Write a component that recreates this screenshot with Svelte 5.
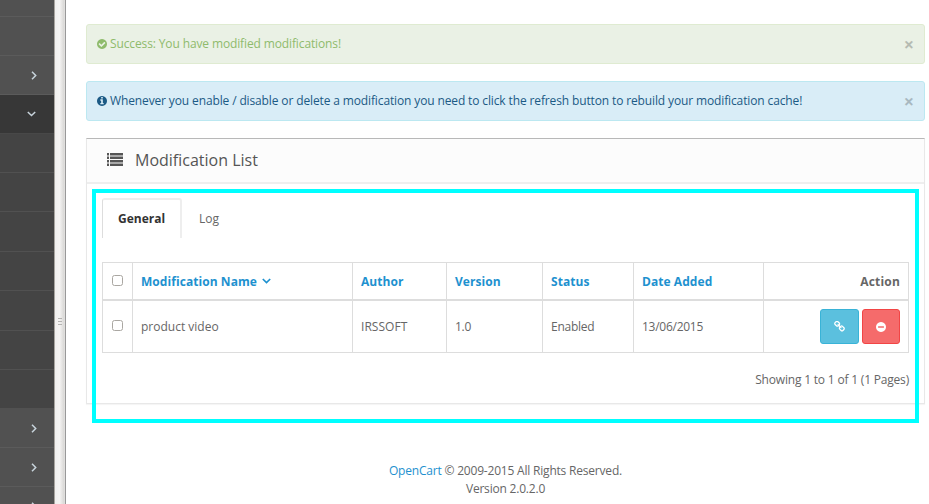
<script>
  const menu = [
    { h: 17 }, { h: 39 }, { h: 39, icon: 'right' }, { h: 39, active: true, icon: 'down' },
    { h: 39, sub: true }, { h: 39, sub: true }, { h: 40, sub: true }, { h: 39, sub: true },
    { h: 40, sub: true }, { h: 39, sub: true }, { h: 39, sub: true, last: true },
    { h: 39, icon: 'right' }, { h: 39, icon: 'right' }, { h: 39, icon: 'right' }
  ];
  const columns = ['Author', 'Version', 'Status', 'Date Added'];
  const cells = [
    { text: 'IRSSOFT', spacing: 0.05 },
    { text: '1.0', spacing: -0.3 },
    { text: 'Enabled', spacing: -0.25 },
    { text: '13/06/2015', spacing: -0.27 }
  ];
  const disc = 'm320-64q0 209-103 385.5t-279.5 279.5-385.5 103-385.5-103-279.5-279.5-103-385.5 103-385.5 279.5-279.5 385.5-103 385.5 103 279.5 279.5 103 385.5z';
</script>

<div class="page">
  <nav class="sidebar">
    {#each menu as item}
      <div class="item" class:active={item.active} class:sub={item.sub} class:last={item.last} style:height="{item.h}px">
        {#if item.icon === 'right'}
          <svg class="right" width="6" height="9" viewBox="0 0 6 9"><path d="M1 .8 4.7 4.5 1 8.2" /></svg>
        {:else if item.icon === 'down'}
          <svg class="down" width="9" height="6" viewBox="0 0 9 6"><path d="M.8 1 4.5 4.5 8.2 1" /></svg>
        {/if}
      </div>
    {/each}
  </nav>
  <div class="splitter"><i></i><i></i><i></i></div>

  <main>
    <div class="alert success">
      <svg class="circle" width="10" height="10" viewBox="128 128 1536 1536"><path d="M1412 734q0-28-18-46l-91-90q-19-19-45-19t-45 19l-408 407-226-226q-19-19-45-19t-45 19l-91 90q-18 18-18 46 0 27 18 45l362 362q19 19 45 19 27 0 46-19l543-543q18-18 18-45zm252 162q0 209-103 385.5t-279.5 279.5-385.5 103-385.5-103-279.5-279.5-103-385.5 103-385.5 279.5-279.5 385.5-103 385.5 103 279.5 279.5 103 385.5z" /></svg>
      <span class="s1">Success: You have modified modifications!</span>
      <b class="close">×</b>
    </div>
    <div class="alert info">
      <svg class="circle" width="10" height="10" viewBox="128 128 1536 1536"><path d="M1152 1376v-160q0-14-9-23t-23-9h-96v-512q0-14-9-23t-23-9h-320q-14 0-23 9t-9 23v160q0 14 9 23t23 9h96v320h-96q-14 0-23 9t-9 23v160q0 14 9 23t23 9h448q14 0 23-9t9-23zm-128-896v-160q0-14-9-23t-23-9h-192q-14 0-23 9t-9 23v160q0 14 9 23t23 9h192q14 0 23-9t9-23zm640 416q0 209-103 385.5t-279.5 279.5-385.5 103-385.5-103-279.5-279.5-103-385.5 103-385.5 279.5-279.5 385.5-103 385.5 103 279.5 279.5 103 385.5z" /></svg>
      <span class="s2">Whenever you enable / disable or delete a modification you need to click the refresh button to rebuild your modification cache!</span>
      <b class="close">×</b>
    </div>

    <section class="panel">
      <header>
        <svg width="16" height="13" viewBox="0 0 16 13"><path d="M0 0h2v2.4H0zM3 0h13v2.4H3zM0 3.5h2v2.4H0zM3 3.5h13v2.4H3zM0 7h2v2.4H0zM3 7h13v2.4H3zM0 10.5h2v2.4H0zM3 10.5h13v2.4H3z" /></svg>
        <h3>Modification List</h3>
      </header>
      <div class="body">
        <div class="tabs">
          <div class="tab on"><span>General</span></div>
          <div class="tab"><span>Log</span></div>
        </div>
        <table>
          <colgroup>
            <col style:width="30px" /><col style:width="220px" /><col style:width="94px" /><col style:width="96px" /><col style:width="91px" /><col style:width="130px" /><col style:width="145px" />
          </colgroup>
          <thead>
            <tr>
              <th class="check"><i class="box"></i></th>
              <th><span class="name">Modification Name</span><svg class="sort" width="9" height="6" viewBox="0 0 9 6"><path d="M.8 1 4.5 4.5 8.2 1" /></svg></th>
              {#each columns as c}<th>{c}</th>{/each}
              <th class="end">Action</th>
            </tr>
          </thead>
          <tbody>
            <tr>
              <td class="check"><i class="box"></i></td>
              <td>product video</td>
              {#each cells as c}<td style:letter-spacing="{c.spacing}px">{c.text}</td>{/each}
              <td class="end">
                <div class="actions">
                  <span class="btn blue"><svg width="11" height="11" viewBox="64 64 1664 1664"><path d="M1520 1216q0-40-28-68l-208-208q-28-28-68-28-42 0-72 32 3 3 19 18.5t21.5 21.5 15 19 13 25.5 3.5 27.5q0 40-28 68t-68 28q-15 0-27.5-3.5t-25.5-13-19-15-21.5-21.5-18.5-19q-33 31-33 73 0 40 28 68l206 207q27 27 68 27 40 0 68-26l147-146q28-28 28-67zm-703-705q0-40-28-68l-206-207q-28-28-68-28-39 0-68 27l-147 146q-28 28-28 67 0 40 28 68l208 208q27 27 68 27 42 0 72-31-3-3-19-18.5t-21.5-21.5-15-19-13-25.5-3.5-27.5q0-40 28-68t68-28q15 0 27.5 3.5t25.5 13 19 15 21.5 21.5 18.5 19q33-31 33-73zm895 705q0 120-85 203l-147 146q-83 83-203 83-121 0-204-85l-206-207q-83-83-83-203 0-123 88-209l-88-88q-86 88-208 88-120 0-204-84l-208-208q-84-84-84-204t85-203l147-146q83-83 203-83 121 0 204 85l206 207q83 83 83 203 0 123-88 209l88 88q86-88 208-88 120 0 204 84l208 208q84 84 84 204z" /></svg></span>
                  <span class="btn red"><svg width="10" height="10" viewBox="128 128 1536 1536"><path d={'M1344 960v-128q0-26-19-45t-45-19h-768q-26 0-45 19t-19 45v128q0 26 19 45t45 19h768q26 0 45-19t19-45z' + disc} /></svg></span>
                </div>
              </td>
            </tr>
          </tbody>
        </table>
        <div class="count"><span>Showing 1 to 1 of 1 (1 Pages)</span></div>
      </div>
      <div class="highlight"></div>
    </section>

    <footer>
      <div class="f1"><span class="brand">OpenCart</span> © 2009-2015 All Rights Reserved.</div>
      <div class="f2">Version 2.0.2.0</div>
    </footer>
  </main>
</div>

<style>
  :global(body) { background: #fff; overflow: hidden; }
  .page { display: flex; width: 929px; height: 504px; overflow: hidden; font: 12px/17px 'Open Sans', 'Noto Sans', sans-serif; color: #666; }
  .page * { box-sizing: border-box; }
  svg { display: block; flex: none; fill: currentColor; }
  .sidebar { width: 54px; height: 504px; flex: none; overflow: hidden; background: #515151; }
  .item { border-bottom: 1px solid #5b5b5b; display: flex; align-items: center; justify-content: flex-end; color: #c8d4dc; }
  .item.sub { background: #444; border-color: #515151; }
  .item.active { background: #373737; border-color: #484848; }
  .item.last { border-color: #515151; }
  .item svg, .sort { fill: none; stroke: currentColor; stroke-width: 1.5; }
  .right { margin-right: 17px; }
  .down { margin-right: 18px; }
  .splitter { width: 12px; flex: none; border-left: 1px solid #a8a5a0; border-right: 1px solid #999; background: linear-gradient(90deg, #f1f0ef, #f5f4f3 45%, #d9d8d6 90%, #e7e6e5); padding: 318px 0 0 3px; }
  .splitter i { display: block; width: 4px; height: 1px; margin-bottom: 2px; background: #b4b3b1; }
  main { flex: 1; padding: 24px 4px 0 20px; }
  .alert { height: 40px; margin-bottom: 17px; padding: 0 10px 1px 10px; border: 1px solid; border-radius: 3px; display: flex; align-items: center; white-space: nowrap; }
  .alert span { margin-left: 3px; }
  .success { background: #eaf1e5; border-color: #dfebd1; color: #8fbb6c; }
  .info { background: #d9edf7; border-color: #bce8f1; color: #1b5a85; }
  .close { margin-left: auto; padding-top: 1px; font-size: 18px; line-height: 18px; color: #000; opacity: .22; }
  .s1 { letter-spacing: -.125px; }
  .s2 { letter-spacing: -.13px; }
  .panel { position: relative; height: 266px; border: 1px solid #e8e8e8; border-top: 1px solid #b8b8b8; box-shadow: 0 1px 1px rgba(0,0,0,.04); }
  header { height: 45px; background: #fcfcfc; border-bottom: 2px solid #eee; display: flex; align-items: center; padding: 0 0 2px 20px; color: #555; }
  h3 { margin: 0 0 0 12px; font-size: 16px; line-height: 20px; font-weight: 400; letter-spacing: 0; }
  .body { padding: 14px 15px 0; }
  .tabs { display: flex; height: 40px; margin-bottom: 24px; }
  .tab { padding: 12px 16px 0 17px; height: 40px; }
  .tab.on { width: 80px; padding-left: 15px; border: 1px solid #ddd; border-bottom: 0; border-radius: 3px 3px 0 0; border-right: 2px solid #eee; border-top: 2px solid #eee; padding-top: 10px; font-weight: 700; color: #333; }
  table { width: 807px; table-layout: fixed; border-collapse: separate; border-spacing: 0; border-left: 1px solid #ddd; border-top: 1px solid #ddd; }
  th, td { padding: 0 8px; border-right: 1px solid #ddd; border-bottom: 1px solid #ddd; text-align: left; vertical-align: middle; white-space: nowrap; }
  th { height: 38px; border-bottom-width: 2px; color: #1e91cf; font-weight: 700; letter-spacing: .06px; }
  td { height: 52px; }
  th.end, td.end { text-align: right; color: #666; }
  th.end { letter-spacing: .18px; }
  .check { padding: 0 0 2px 9px; }
  .box { display: block; width: 11px; height: 11px; border: 1px solid #aaa7a2; border-radius: 2.5px; background: #fff; }
  .sort { display: inline-block; margin-left: 5px; vertical-align: 2px; stroke-width: 1.7; }
  .actions { display: flex; justify-content: flex-end; gap: 3px; }
  .btn { height: 35px; display: flex; align-items: center; justify-content: center; border: 1px solid; border-radius: 3px; color: #fff; }
  .blue { width: 39px; background: #5bc0de; border-color: #39b3d7; }
  .red { width: 38px; background: #f56b6b; border-color: #f24545; }
  .count { text-align: right; margin-top: 18px; letter-spacing: -.19px; }
  .highlight { position: absolute; left: 5px; top: 50px; width: 827px; height: 234px; border: 4px solid #00ffff; }
  footer { margin-top: 58px; text-align: center; line-height: 18px; }
  .f1 { letter-spacing: -.2px; }
  .f2 { letter-spacing: -.2px; }
  .brand { color: #1e91cf; }
</style>
